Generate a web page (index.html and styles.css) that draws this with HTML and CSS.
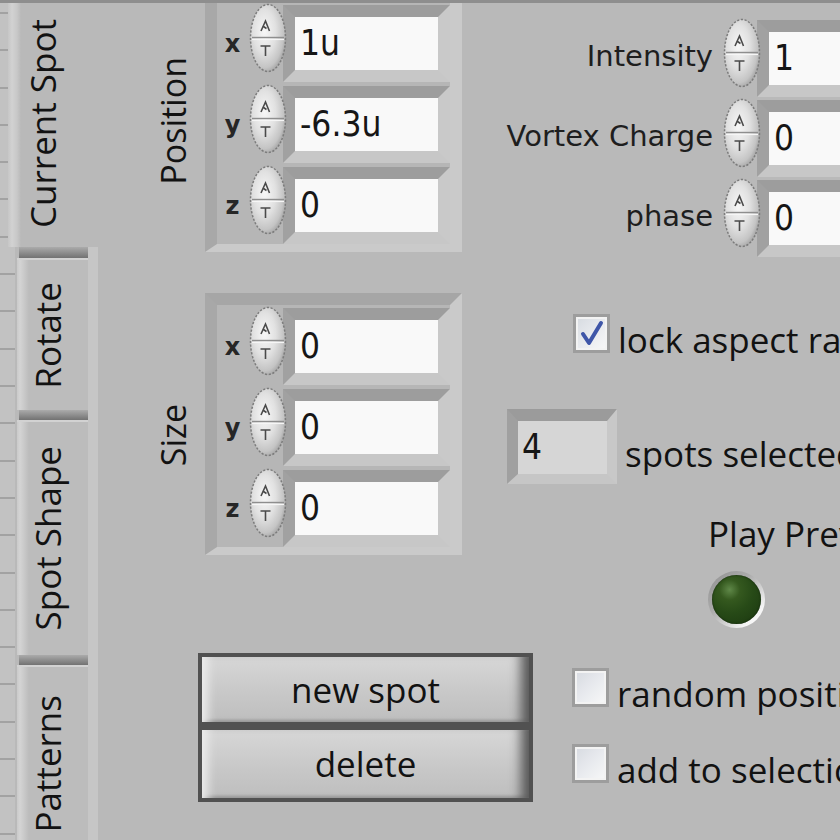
FILE: index.html
```html
<!DOCTYPE html>
<html lang="en">
<head>
<meta charset="utf-8">
<title>Current Spot</title>
<link rel="stylesheet" href="styles.css">
</head>
<body>
<svg class="defs" width="0" height="0" aria-hidden="true">
  <defs>
    <radialGradient id="sg" cx="40%" cy="40%" r="64%">
      <stop offset="0" stop-color="#f7f7f7"/>
      <stop offset="0.5" stop-color="#e1e1e1"/>
      <stop offset="0.85" stop-color="#c4c4c4"/>
      <stop offset="1" stop-color="#a4a4a4"/>
    </radialGradient>
  </defs>
</svg>
<div class="app">
  <nav class="tabs">
    <div class="tab active"><span class="tab-label">Current Spot</span></div>
    <div class="tab-rest">
      <div class="tab-sep first"></div>
      <div class="tab inactive t-rotate"><span class="tab-label">Rotate</span></div>
      <div class="tab-sep"></div>
      <div class="tab inactive t-shape"><span class="tab-label">Spot Shape</span></div>
      <div class="tab-sep"></div>
      <div class="tab inactive t-patterns"><span class="tab-label">Patterns</span></div>
    </div>
  </nav>

  <main class="panel">
    <div class="upper">
      <div class="left-col">
        <section class="cluster cluster-pos">
          <div class="vlabel-cell"><span class="vlabel">Position</span></div>
          <div class="group">
            <div class="row"><span class="axis">x</span>
              <svg class="spin" viewBox="0 0 39 70"><ellipse cx="20" cy="35" rx="17.5" ry="33.5" fill="url(#sg)" stroke="#7c7c7c" stroke-width="1.5" stroke-dasharray="2.2 1.6"/><path d="M4 34.5H36" stroke="#8e8e8e" stroke-width="1.4"/><path d="M4 36.5H36" stroke="#f6f6f6" stroke-width="1.2"/><path d="M13 28L17.5 18L21.5 28M15.5 23.5L18.5 25.5" fill="none" stroke="#4a4a4a" stroke-width="1.6"/><path d="M12.5 43H22.5M17.5 43V53" fill="none" stroke="#4a4a4a" stroke-width="1.6"/></svg>
              <div class="num"><span class="field">1u</span></div></div>
            <div class="row"><span class="axis">y</span>
              <svg class="spin" viewBox="0 0 39 70"><ellipse cx="20" cy="35" rx="17.5" ry="33.5" fill="url(#sg)" stroke="#7c7c7c" stroke-width="1.5" stroke-dasharray="2.2 1.6"/><path d="M4 34.5H36" stroke="#8e8e8e" stroke-width="1.4"/><path d="M4 36.5H36" stroke="#f6f6f6" stroke-width="1.2"/><path d="M13 28L17.5 18L21.5 28M15.5 23.5L18.5 25.5" fill="none" stroke="#4a4a4a" stroke-width="1.6"/><path d="M12.5 43H22.5M17.5 43V53" fill="none" stroke="#4a4a4a" stroke-width="1.6"/></svg>
              <div class="num"><span class="field">-6.3u</span></div></div>
            <div class="row"><span class="axis">z</span>
              <svg class="spin" viewBox="0 0 39 70"><ellipse cx="20" cy="35" rx="17.5" ry="33.5" fill="url(#sg)" stroke="#7c7c7c" stroke-width="1.5" stroke-dasharray="2.2 1.6"/><path d="M4 34.5H36" stroke="#8e8e8e" stroke-width="1.4"/><path d="M4 36.5H36" stroke="#f6f6f6" stroke-width="1.2"/><path d="M13 28L17.5 18L21.5 28M15.5 23.5L18.5 25.5" fill="none" stroke="#4a4a4a" stroke-width="1.6"/><path d="M12.5 43H22.5M17.5 43V53" fill="none" stroke="#4a4a4a" stroke-width="1.6"/></svg>
              <div class="num"><span class="field">0</span></div></div>
          </div>
        </section>

        <section class="cluster cluster-size">
          <div class="vlabel-cell"><span class="vlabel">Size</span></div>
          <div class="group">
            <div class="row"><span class="axis">x</span>
              <svg class="spin" viewBox="0 0 39 70"><ellipse cx="20" cy="35" rx="17.5" ry="33.5" fill="url(#sg)" stroke="#7c7c7c" stroke-width="1.5" stroke-dasharray="2.2 1.6"/><path d="M4 34.5H36" stroke="#8e8e8e" stroke-width="1.4"/><path d="M4 36.5H36" stroke="#f6f6f6" stroke-width="1.2"/><path d="M13 28L17.5 18L21.5 28M15.5 23.5L18.5 25.5" fill="none" stroke="#4a4a4a" stroke-width="1.6"/><path d="M12.5 43H22.5M17.5 43V53" fill="none" stroke="#4a4a4a" stroke-width="1.6"/></svg>
              <div class="num"><span class="field">0</span></div></div>
            <div class="row"><span class="axis">y</span>
              <svg class="spin" viewBox="0 0 39 70"><ellipse cx="20" cy="35" rx="17.5" ry="33.5" fill="url(#sg)" stroke="#7c7c7c" stroke-width="1.5" stroke-dasharray="2.2 1.6"/><path d="M4 34.5H36" stroke="#8e8e8e" stroke-width="1.4"/><path d="M4 36.5H36" stroke="#f6f6f6" stroke-width="1.2"/><path d="M13 28L17.5 18L21.5 28M15.5 23.5L18.5 25.5" fill="none" stroke="#4a4a4a" stroke-width="1.6"/><path d="M12.5 43H22.5M17.5 43V53" fill="none" stroke="#4a4a4a" stroke-width="1.6"/></svg>
              <div class="num"><span class="field">0</span></div></div>
            <div class="row"><span class="axis">z</span>
              <svg class="spin" viewBox="0 0 39 70"><ellipse cx="20" cy="35" rx="17.5" ry="33.5" fill="url(#sg)" stroke="#7c7c7c" stroke-width="1.5" stroke-dasharray="2.2 1.6"/><path d="M4 34.5H36" stroke="#8e8e8e" stroke-width="1.4"/><path d="M4 36.5H36" stroke="#f6f6f6" stroke-width="1.2"/><path d="M13 28L17.5 18L21.5 28M15.5 23.5L18.5 25.5" fill="none" stroke="#4a4a4a" stroke-width="1.6"/><path d="M12.5 43H22.5M17.5 43V53" fill="none" stroke="#4a4a4a" stroke-width="1.6"/></svg>
              <div class="num"><span class="field">0</span></div></div>
          </div>
        </section>
      </div>

      <div class="right-col">
        <div class="props">
          <div class="prow"><span class="plabel">Intensity</span>
            <svg class="spin" viewBox="0 0 39 70"><ellipse cx="20" cy="35" rx="17.5" ry="33.5" fill="url(#sg)" stroke="#7c7c7c" stroke-width="1.5" stroke-dasharray="2.2 1.6"/><path d="M4 34.5H36" stroke="#8e8e8e" stroke-width="1.4"/><path d="M4 36.5H36" stroke="#f6f6f6" stroke-width="1.2"/><path d="M13 28L17.5 18L21.5 28M15.5 23.5L18.5 25.5" fill="none" stroke="#4a4a4a" stroke-width="1.6"/><path d="M12.5 43H22.5M17.5 43V53" fill="none" stroke="#4a4a4a" stroke-width="1.6"/></svg>
            <div class="num wide"><span class="field">1</span></div></div>
          <div class="prow"><span class="plabel">Vortex Charge</span>
            <svg class="spin" viewBox="0 0 39 70"><ellipse cx="20" cy="35" rx="17.5" ry="33.5" fill="url(#sg)" stroke="#7c7c7c" stroke-width="1.5" stroke-dasharray="2.2 1.6"/><path d="M4 34.5H36" stroke="#8e8e8e" stroke-width="1.4"/><path d="M4 36.5H36" stroke="#f6f6f6" stroke-width="1.2"/><path d="M13 28L17.5 18L21.5 28M15.5 23.5L18.5 25.5" fill="none" stroke="#4a4a4a" stroke-width="1.6"/><path d="M12.5 43H22.5M17.5 43V53" fill="none" stroke="#4a4a4a" stroke-width="1.6"/></svg>
            <div class="num wide"><span class="field">0</span></div></div>
          <div class="prow"><span class="plabel">phase</span>
            <svg class="spin" viewBox="0 0 39 70"><ellipse cx="20" cy="35" rx="17.5" ry="33.5" fill="url(#sg)" stroke="#7c7c7c" stroke-width="1.5" stroke-dasharray="2.2 1.6"/><path d="M4 34.5H36" stroke="#8e8e8e" stroke-width="1.4"/><path d="M4 36.5H36" stroke="#f6f6f6" stroke-width="1.2"/><path d="M13 28L17.5 18L21.5 28M15.5 23.5L18.5 25.5" fill="none" stroke="#4a4a4a" stroke-width="1.6"/><path d="M12.5 43H22.5M17.5 43V53" fill="none" stroke="#4a4a4a" stroke-width="1.6"/></svg>
            <div class="num wide"><span class="field">0</span></div></div>
        </div>

        <div class="check-row lock">
          <span class="cb"><svg viewBox="0 0 31 33" width="31" height="33"><path d="M7 17L13 26L25 6" fill="none" stroke="#3f56a8" stroke-width="4" stroke-linecap="round" stroke-linejoin="round"/></svg></span>
          <span class="cb-text">lock aspect ratio</span>
        </div>

        <div class="ind-row">
          <div class="indicator">4</div>
          <span class="ind-text">spots selected</span>
        </div>

        <div class="play-label">Play Preview</div>
        <div class="led"><div class="led-core"></div></div>
      </div>
    </div>

    <div class="lower">
      <div class="buttons">
        <div class="btn btn-new">new spot</div>
        <div class="btn btn-del">delete</div>
      </div>
      <div class="checks">
        <div class="check-row"><span class="cb"></span><span class="cb-text">random position</span></div>
        <div class="check-row second"><span class="cb"></span><span class="cb-text">add to selection</span></div>
      </div>
    </div>
  </main>
</div>
</body>
</html>
```
FILE: styles.css
```css
* { box-sizing: border-box; }

body {
  margin: 0;
  background: #b9b9b9;
}

.defs { position: absolute; width: 0; height: 0; }

.app {
  position: relative;
  display: flex;
  width: 840px;
  height: 840px;
  overflow: hidden;
  background: #b9b9b9;
  font-family: "Open Sans", "Noto Sans", sans-serif;
  color: #121212;
}

.app::before {
  content: "";
  position: absolute;
  left: 0;
  top: 0;
  right: 0;
  height: 3px;
  background: #8e8e8e;
  z-index: 10;
}

/* ---------- tabs ---------- */
.tabs {
  flex: none;
  width: 98px;
  display: flex;
  flex-direction: column;
  background:
    repeating-linear-gradient(to bottom, transparent 0 12px, #a2a2a2 12px 14px, transparent 14px 37.3px) 0 0 / 15px 100% no-repeat,
    linear-gradient(to right, #c2c2c2 0 15px, #b9b9b9 15px);
}

.tab {
  flex: none;
  display: flex;
  align-items: center;
}

.tab.active {
  margin-left: 8px;
  height: 247px;
  padding-left: 15px;
  background: linear-gradient(to right, #c6c6c6 0, #d2d2d2 4px, #c8c8c8 9px, #b9b9b9 13px);
}

.tab-rest {
  flex: 1;
  display: flex;
  flex-direction: column;
  padding-left: 17px;
  border-right: 10px solid #c6c6c6;
  min-height: 0;
}

.tab-sep {
  flex: none;
  height: 10px;
  margin-left: 2px;
  background: linear-gradient(to bottom, #ababab, #727272);
}
.tab-sep.first { height: 11px; }

.tab.inactive {
  padding-left: 11px;
  border-top: 2px solid #d2d2d2;
  background: linear-gradient(to right, #cacaca 0, #d4d4d4 3px, #c4c4c4 9px, #bcbcbc 12px);
}
.t-rotate { height: 152px; }
.t-shape { height: 235px; }
.t-patterns { height: 195px; }

.tab-label {
  writing-mode: vertical-rl;
  transform: rotate(180deg);
  font-size: 35px;
  line-height: 40px;
  white-space: nowrap;
}

/* ---------- panel ---------- */
.panel {
  flex: none;
  width: 742px;
  display: flex;
  flex-direction: column;
}

.upper {
  flex: none;
  display: flex;
  height: 653px;
}

.left-col {
  flex: none;
  width: 364px;
  display: flex;
  flex-direction: column;
}

.cluster { flex: none; display: flex; }
.cluster-pos { margin-top: -10px; }
.cluster-size { margin-top: 41px; }

.vlabel-cell {
  width: 107px;
  padding-left: 55px;
  display: flex;
  align-items: center;
}
.cluster-size .vlabel-cell { padding-top: 22px; }

.vlabel {
  writing-mode: vertical-rl;
  transform: rotate(180deg);
  font-size: 34px;
  line-height: 40px;
  white-space: nowrap;
}

.group {
  flex: none;
  width: 257px;
  border-style: solid;
  border-width: 12px 12px 8px 12px;
  border-color: #a6a6a6 #cacaca #cacaca #a8a8a8;
  padding-top: 3px;
  display: flex;
  flex-direction: column;
  gap: 4px;
  background: #b6b6b6;
}

.row {
  flex: none;
  display: flex;
  align-items: flex-start;
  height: 77px;
}

.axis {
  flex: none;
  width: 31px;
  padding-top: 2px;
  line-height: 75px;
  text-align: center;
  font-family: "DejaVu Sans", sans-serif;
  font-weight: bold;
  font-size: 24px;
  color: #262626;
}

.spin {
  position: relative;
  z-index: 1;
  flex: none;
  width: 39px;
  height: 70px;
  margin-top: -2px;
}

.num {
  flex: none;
  width: 167px;
  height: 77px;
  margin-left: -4px;
  border: 12px solid;
  border-color: #9d9d9d #c9c9c9 #c7c7c7 #a1a1a1;
  background: #f9f9f9;
}
.num.wide { width: 200px; }

.field {
  display: block;
  padding-left: 5px;
  line-height: 53px;
  font-family: "DejaVu Sans Condensed", "DejaVu Sans", sans-serif;
  font-size: 35px;
  white-space: nowrap;
  color: #161616;
}

/* ---------- right column ---------- */
.right-col {
  flex: none;
  width: 378px;
  display: flex;
  flex-direction: column;
}

.props {
  margin-top: 20px;
  display: flex;
  flex-direction: column;
  gap: 3px;
}

.prow {
  flex: none;
  display: flex;
  align-items: flex-start;
  height: 77px;
}

.plabel {
  flex: none;
  width: 251px;
  text-align: right;
  line-height: 73px;
  font-family: "DejaVu Sans", sans-serif;
  font-size: 29px;
  white-space: nowrap;
  color: #1e1e1e;
}
.prow .spin { margin-left: 9px; }

.check-row {
  display: flex;
  align-items: baseline;
  font-size: 35px;
  line-height: 40px;
  white-space: nowrap;
}
.lock {
  margin-top: 57px;
  padding-left: 111px;
}

.cb {
  flex: none;
  width: 37px;
  height: 39px;
  border: 3px solid #9d9d9d;
  background: linear-gradient(135deg, #d6dae0 0%, #e8eaee 50%, #f8f8f8 100%);
  box-shadow: inset 0 0 0 2px #f3f3f3;
}
.cb svg { display: block; }

.cb-text { margin-left: 8px; }

.ind-row {
  display: flex;
  align-items: center;
  margin-top: 48.5px;
  padding-left: 45px;
}

.indicator {
  flex: none;
  width: 110px;
  height: 75px;
  border-style: solid;
  border-width: 12px 10px 10px 11px;
  border-color: #9b9b9b #c8c8c8 #c6c6c6 #a0a0a0;
  background: #d6d6d6;
  padding-left: 4px;
  line-height: 53px;
  font-family: "DejaVu Sans Condensed", "DejaVu Sans", sans-serif;
  font-size: 35px;
  color: #161616;
}

.ind-text {
  margin-left: 8px;
  padding-top: 16px;
  font-size: 35px;
  line-height: 40px;
  white-space: nowrap;
}

.play-label {
  margin-top: 30.5px;
  padding-left: 246px;
  font-size: 35px;
  line-height: 40px;
  white-space: nowrap;
}

.led {
  flex: none;
  width: 57px;
  height: 57px;
  margin-top: 16.5px;
  margin-left: 246px;
  padding: 4px;
  border-radius: 50%;
  background: linear-gradient(135deg, #909090 0%, #acacac 40%, #f5f5f5 80%, #ffffff 100%);
}

.led-core {
  width: 100%;
  height: 100%;
  border-radius: 50%;
  background: radial-gradient(circle at 36% 30%, #5f8848 0, #35591f 22%, #274a17 50%, #1a360f 100%);
  box-shadow: inset 0 0 2px #0e1f08;
}

/* ---------- lower row ---------- */
.lower {
  flex: none;
  display: flex;
  padding-left: 100px;
}

.buttons {
  flex: none;
  width: 335px;
  display: flex;
  flex-direction: column;
}

.btn {
  display: flex;
  align-items: center;
  justify-content: center;
  border: 4px solid #515151;
  font-size: 35px;
  line-height: 40px;
  background: linear-gradient(to bottom, #d7d7d7 0%, #c8c8c8 55%, #bebebe 100%);
  box-shadow: inset 14px 0 10px -8px #ececec, inset -16px 0 12px -8px #575757, inset 0 -3px 3px -1px #9a9a9a;
}
.btn-new { height: 73px; }
.btn-del { height: 76px; }

.checks {
  flex: none;
  margin-left: 39px;
  padding-top: 15px;
  display: flex;
  flex-direction: column;
}
.check-row.second { margin-top: 29.5px; }
```
